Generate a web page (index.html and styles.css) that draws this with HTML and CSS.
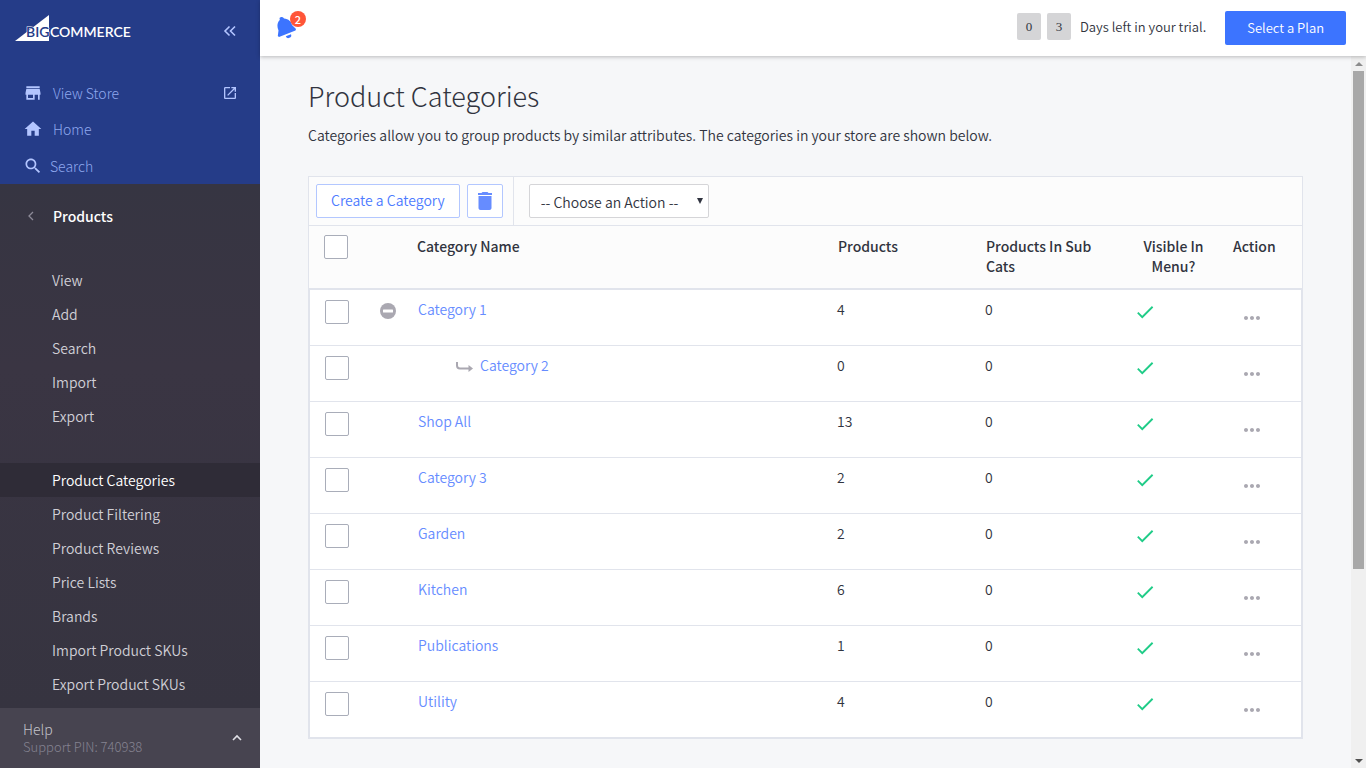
FILE: index.html
```html
<!DOCTYPE html>
<html lang="en">
<head>
<meta charset="utf-8">
<title>Product Categories</title>
<link rel="stylesheet" href="styles.css">
</head>
<body>
<svg class="defs" aria-hidden="true">
  <symbol id="check" viewBox="0 0 24 24"><path d="M9 16.17L4.83 12l-1.42 1.41L9 19 21 7l-1.41-1.41z"/></symbol>
  <symbol id="dots" viewBox="0 0 24 24"><path d="M6 10c-1.1 0-2 .9-2 2s.9 2 2 2 2-.9 2-2-.9-2-2-2zm12 0c-1.1 0-2 .9-2 2s.9 2 2 2 2-.9 2-2-.9-2-2-2zm-6 0c-1.1 0-2 .9-2 2s.9 2 2 2 2-.9 2-2-.9-2-2-2z"/></symbol>
</svg>
<div class="app">
  <aside class="sidebar">
    <div class="top">
      <div class="brand">
        <a href="#" class="logo" aria-label="BigCommerce">
          <svg width="118" height="28" viewBox="0 0 118 28">
            <path d="M0 27L34 1v26z" fill="#fff"/>
            <text x="11" y="23" class="logo-big">BIG</text>
            <text x="35" y="23" class="logo-commerce">COMMERCE</text>
          </svg>
        </a>
        <button class="icon-btn" aria-label="Collapse menu">
          <svg width="14" height="14" viewBox="0 0 14 14" fill="none" stroke="#b3c5ff" stroke-width="1.6"><path d="M6.500 2.500L2 7l4.500 4.500M12 2.500L7.500 7l4.500 4.500"/></svg>
        </button>
      </div>
      <nav class="main-nav">
        <a href="#"><svg width="20" height="20" viewBox="0 0 24 24"><path d="M20 4H4v2h16V4zm1 10v-2l-1-5H4l-1 5v2h1v6h10v-6h4v6h2v-6h1zm-9 4H6v-4h6v4z"/></svg><span>View Store</span><svg class="ext" width="16" height="16" viewBox="0 0 24 24"><path d="M19 19H5V5h7V3H5c-1.110 0-2 .9-2 2v14c0 1.100.89 2 2 2h14c1.100 0 2-.9 2-2v-7h-2v7zM14 3v2h3.590l-9.830 9.830 1.410 1.410L19 6.410V10h2V3h-7z"/></svg></a>
        <a href="#"><svg width="20" height="20" viewBox="0 0 24 24"><path d="M10 20v-6h4v6h5v-8h3L12 3 2 12h3v8z"/></svg><span>Home</span></a>
        <a href="#" class="search"><svg width="20" height="20" viewBox="0 0 24 24"><path d="M15.500 14h-.79l-.28-.27C15.410 12.590 16 11.110 16 9.500 16 5.910 13.090 3 9.500 3S3 5.910 3 9.500 5.910 16 9.500 16c1.610 0 3.090-.59 4.230-1.570l.27.28v.79l5 4.990L20.490 19l-4.990-5zm-6 0C7.010 14 5 11.990 5 9.500S7.010 5 9.500 5 14 7.010 14 9.500 11.990 14 9.500 14z"/></svg><span>Search</span></a>
      </nav>
    </div>
    <nav class="sub">
      <button class="back"><svg width="8" height="10" viewBox="0 0 8 10" fill="none" stroke="#8d8b98" stroke-width="1.300"><path d="M6 1L2 5l4 4"/></svg>Products</button>
      <ul>
        <li><a href="#">View</a></li>
        <li><a href="#">Add</a></li>
        <li><a href="#">Search</a></li>
        <li><a href="#">Import</a></li>
        <li><a href="#">Export</a></li>
      </ul>
      <ul>
        <li><a href="#" class="active">Product Categories</a></li>
        <li><a href="#">Product Filtering</a></li>
        <li><a href="#">Product Reviews</a></li>
        <li><a href="#">Price Lists</a></li>
        <li><a href="#">Brands</a></li>
        <li><a href="#">Import Product SKUs</a></li>
        <li><a href="#">Export Product SKUs</a></li>
      </ul>
    </nav>
    <button class="help">
      <span><span class="help-title">Help</span><span class="pin">Support PIN: 740938</span></span>
      <svg width="10" height="8" viewBox="0 0 10 8" fill="none" stroke="#e0e0e6" stroke-width="1.600"><path d="M1 6l4-4 4 4"/></svg>
    </button>
  </aside>
  <div class="page">
    <header class="bar">
      <button class="bell" aria-label="Notifications">
        <svg width="20" height="24" viewBox="0 0 20 24" fill="#3c74ff"><path d="M2.500 2C4 .5 6 1 7 2.500c4.500.5 7.500 3 8 6.500L19 13l-.5 1.500L2 21 .8 20l.7-5.500C-.5 10 .5 6 2.800 4z"/><path d="M8.800 20.300l5.200-2.100a2.700 2.700 0 0 1-5.200 2.100z"/></svg>
        <span class="badge">2</span>
      </button>
      <div class="trial"><div class="countdown"><span class="digit">0</span><span class="digit">3</span><span class="days">Days left in your trial.</span></div><button class="plan">Select a Plan</button></div>
    </header>
    <div class="scroll">
      <main>
        <h1>Product Categories</h1>
        <p>Categories allow you to group products by similar attributes. The categories in your store are shown below.</p>
        <section class="panel">
          <div class="tools">
            <div class="tool-group">
              <button class="create">Create a Category</button>
              <button class="trash" aria-label="Delete"><svg width="24" height="24" viewBox="0 0 24 24" fill="#668cff"><path d="M5.500 19c0 1.100.9 2 2 2h9c1.100 0 2-.9 2-2V7h-13v12zM19 4h-3.500l-1-1h-5l-1 1H5v2h14V4z"/></svg></button>
            </div>
            <div class="choose"><select aria-label="Choose an action"><option>-- Choose an Action --</option></select></div>
          </div>
          <table>
            <colgroup><col class="c1"><col class="c2"><col><col class="c4"><col class="c5"><col class="c6"><col class="c7"></colgroup>
            <thead><tr><th><input type="checkbox" aria-label="Select all"></th><th></th><th>Category Name</th><th class="num">Products</th><th class="num">Products In Sub Cats</th><th class="center">Visible In Menu?</th><th>Action</th></tr></thead>
            <tbody id="rows"></tbody>
          </table>
        </section>
      </main>
      <div class="track" aria-hidden="true"><i class="up"></i><i class="thumb"></i><i class="down"></i></div>
    </div>
  </div>
</div>
<script src="rows.js"></script>
</body>
</html>
```

FILE: rows.js
```js
const categories = [
  ["Category 1", 4, "parent"], ["Category 2", 0, "child"], ["Shop All", 13], ["Category 3", 2],
  ["Garden", 2], ["Kitchen", 6], ["Publications", 1], ["Utility", 4]
];
const collapse = '<button class="icon-btn" aria-label="Collapse"><svg width="16" height="16" viewBox="0 0 16 16"><circle cx="8" cy="8" r="8" fill="#aaa8b1"/><rect x="3" y="6.500" width="10" height="3" rx=".5" fill="#fff"/></svg></button>';
const branch = '<svg class="branch" width="18" height="12" viewBox="0 0 18 12"><path d="M1 1v3.500c0 2 1 3 3 3h9" fill="none" stroke="#aaa8b1" stroke-width="2"/><path d="M12.500 4l4.500 3.500-4.500 3.500z" fill="#aaa8b1"/></svg>';
document.getElementById("rows").innerHTML = categories.map(([name, count, kind]) => `
  <tr>
    <td><input type="checkbox" aria-label="Select ${name}"></td>
    <td class="toggle">${kind === "parent" ? collapse : ""}</td>
    <td class="${kind === "child" ? "child" : ""}">${kind === "child" ? branch : ""}<a href="#">${name}</a></td>
    <td>${count}</td>
    <td>0</td>
    <td class="visible"><svg width="22" height="22" fill="#20cc88" role="img" aria-label="Visible"><use href="#check"/></svg></td>
    <td class="action"><button class="icon-btn" aria-label="Actions for ${name}"><svg width="24" height="24" fill="#aaa8b1"><use href="#dots"/></svg></button></td>
  </tr>`).join("");
```

FILE: styles.css
```css
* { box-sizing: border-box; }
body { margin: 0; font-family: "Noto Sans CJK SC", "Noto Sans", sans-serif; font-size: 14px; line-height: 20px; font-weight: 350; color: #313440; }
button, select { font: inherit; color: inherit; margin: 0; }
button { background: none; border: 0; padding: 0; cursor: pointer; }
a { text-decoration: none; color: inherit; }
svg { display: block; flex: none; }
.defs { display: none; }
.app { display: flex; height: 100vh; overflow: hidden; }

.sidebar { width: 260px; flex: none; display: flex; flex-direction: column; background: #393544; color: #d0cfd6; }
.top { background: #253c88; height: 184px; flex: none; }
.brand { display: flex; justify-content: space-between; align-items: center; padding: 14px 23px 0 15px; }
.brand .icon-btn { padding-top: 6px; }
.logo-big, .logo-commerce { font-family: Lato, sans-serif; font-weight: 600; font-size: 14px; }
.logo-big { fill: #253c88; stroke: #fff; stroke-width: 1; paint-order: stroke; }
.logo-commerce { fill: #fff; }
.main-nav { padding-top: 33px; }
.main-nav a { display: flex; align-items: center; height: 36px; padding: 0 22px 0 23px; gap: 10px; color: #8fa8ee; font-weight: 300; }
.main-nav svg { fill: #b3c5ff; }
.main-nav .search { gap: 7px; height: 38px; }
.main-nav .ext { margin-left: auto; }
.sub { flex: 1; min-height: 0; overflow: hidden; background: linear-gradient(#363542, #3a3543 35%, #363440); }
.back { display: flex; align-items: center; width: 100%; height: 64px; padding-left: 27px; gap: 18px; color: #fff; font-weight: 500; }
.sub ul { list-style: none; margin: 0 0 30px; padding: 0; }
.sub ul:first-of-type { padding-top: 15px; }
.sub ul:last-child { margin-bottom: 0; }
.sub li a { display: block; padding: 7px 0 7px 52px; }
.sub li .active { background: #2f2c37; color: #fff; }
.help { display: flex; justify-content: space-between; align-items: center; flex: none; height: 60px; padding: 0 18px 0 23px; background: #474450; color: #c4c3ca; text-align: left; font-weight: 300; }
.help-title, .pin { display: block; line-height: 17px; }
.pin { font-size: 13px; color: #858391; }

.page { flex: 1; min-width: 0; display: flex; flex-direction: column; }
.bar { display: flex; justify-content: space-between; align-items: center; height: 56px; flex: none; padding: 0 20px 0 17px; background: #fff; box-shadow: 0 1px 4px rgba(0, 0, 0, .25); z-index: 1; }
.bell { position: relative; }
.badge { position: absolute; left: 13px; top: -5px; width: 16px; height: 16px; border-radius: 8px; background: #ff5538; color: #fff; font-size: 11px; line-height: 16px; text-align: center; font-weight: 500; }
.trial, .countdown { display: flex; align-items: center; }
.countdown { padding-bottom: 3px; }
.digit { width: 24px; height: 27px; margin-right: 6px; border-radius: 2px; background: #d5d5d7; font: 13px/27px "Liberation Serif", serif; text-align: center; }
.days { font-size: 13px; margin: 0 19px 0 3px; }
.plan { height: 34px; padding: 0 22px; border-radius: 2px; background: #3c74ff; color: #fff; font-size: 13px; }

.scroll { flex: 1; min-height: 0; display: flex; background: #f6f7f9; }
main { flex: 1; min-width: 0; padding: 24px 48px 0; overflow: hidden; }
h1 { margin: 0; font-size: 27px; line-height: 32px; font-weight: 300; }
p { margin: 13px 0 31px; }
.panel { border: 1px solid #e1e4ec; background: #fcfcfc; }
.tools { display: flex; height: 48px; }
.tool-group { display: flex; gap: 7px; padding: 7px 10px 7px 7px; border-right: 1px solid #e1e4ec; }
.create, .trash { height: 34px; border: 1px solid #b3c7ff; border-radius: 2px; background: #fff; color: #4d7bff; }
.create { padding: 0 14px 2px; }
.trash { width: 36px; display: flex; align-items: center; justify-content: center; }
.choose { padding: 7px 15px; }
.choose select { width: 180px; height: 34px; padding: 2px 11px 0; border: 1px solid #d5d5d8; border-radius: 2px; color: #313440; appearance: none; background: #fff url("data:image/svg+xml,%3Csvg xmlns='http://www.w3.org/2000/svg' width='6' height='6'%3E%3Cpath d='M0 0h6L3 6z' fill='%23313440'/%3E%3C/svg%3E") no-repeat right 5px top 13px; }

table { width: 100%; table-layout: fixed; border-collapse: separate; border-spacing: 0; border-top: 1px solid #e1e4ec; }
.c1 { width: 60px; }
.c2 { width: 48px; }
.c4 { width: 148px; }
.c5 { width: 129px; }
.c6 { width: 119px; }
.c7 { width: 69px; }
th { height: 62px; padding: 10px 0 0; text-align: left; vertical-align: top; font-weight: 500; }
th.num { padding-left: 1px; padding-right: 16px; }
th.center { text-align: center; padding-right: 20px; padding-left: 20px; }
th:first-child { padding: 9px 0 0 15px; }
input[type=checkbox] { appearance: none; display: block; width: 24px; height: 24px; margin: 0; border: 1px solid #a9adb9; border-radius: 2px; background: #fff; }
tbody { background: #fff; }
td { height: 56px; padding: 9px 0 0; vertical-align: top; border-top: 1px solid #e1e4ec; }
tbody tr:first-child td { border-top: 2px solid #e1e4ec; height: 57px; }
tbody tr:last-child td { border-bottom: 1px solid #e1e4ec; height: 57px; }
td:first-child { border-left: 1px solid #e1e4ec; padding: 10px 0 0 15px; }
td:last-child { border-right: 1px solid #e1e4ec; }
td a { color: #668cff; padding-left: 1px; }
td .icon-btn { display: block; }
.toggle { padding: 13px 0 0 11px; }
.child svg { display: inline-block; vertical-align: middle; margin: 0 5px 0 39px; }
.visible { padding: 11px 0 0 20px; }
.action { padding: 16px 0 0 7px; }

.track { width: 15px; flex: none; display: flex; flex-direction: column; align-items: center; background: #f0f0f0; }
.thumb { width: 11px; height: 70%; background: #a8a8a8; }
.up, .down { border: 4px solid transparent; }
.up { border-top: 0; border-bottom-color: #8c8c8c; margin: 6px 0 5px; }
.down { margin: auto 0 5px; border-bottom: 0; border-top-color: #505050; }
```
